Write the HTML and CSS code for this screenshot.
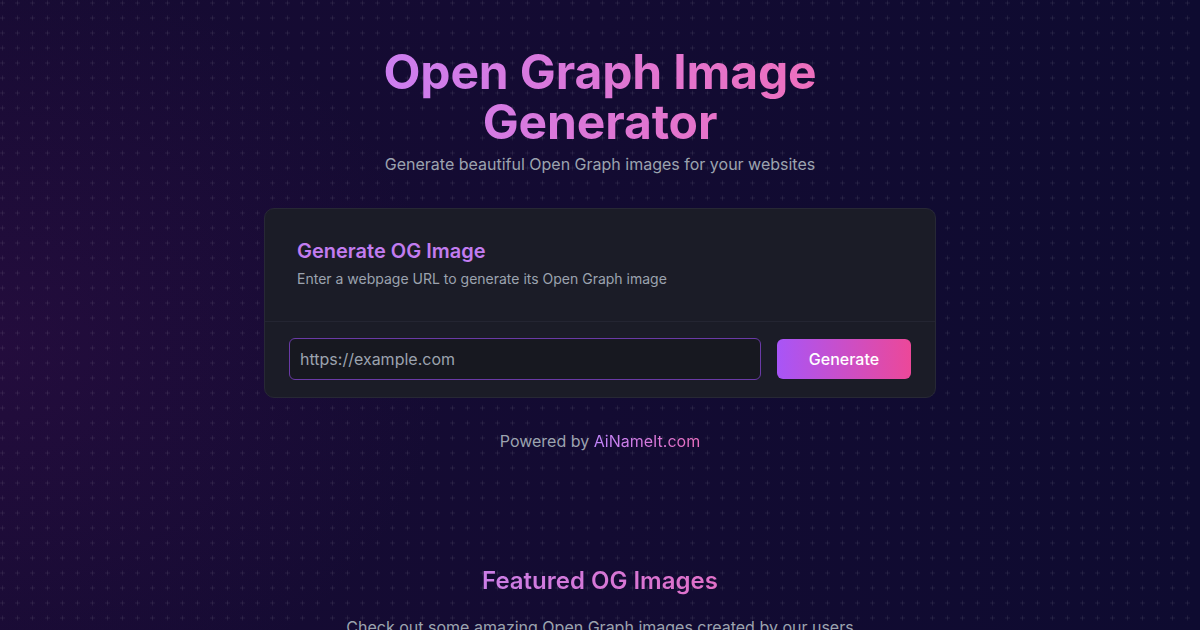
FILE: index.html
```html
<!DOCTYPE html>
<html lang="en">
<head>
<meta charset="utf-8">
<title>Open Graph Image Generator</title>
<link rel="stylesheet" href="styles.css">
</head>
<body>
<div class="page">
  <header class="hero">
    <h1 class="title">Open Graph Image<br>Generator</h1>
    <p class="subtitle">Generate beautiful Open Graph images for your websites</p>
  </header>

  <section class="card">
    <div class="card-header">
      <h2 class="card-title">Generate OG Image</h2>
      <p class="card-desc">Enter a webpage URL to generate its Open Graph image</p>
    </div>
    <form class="card-body">
      <input class="url-input" type="text" placeholder="https://example.com">
      <button class="btn" type="button">Generate</button>
    </form>
  </section>

  <p class="powered">Powered by <span class="brand">AiNameIt.com</span></p>

  <section class="featured">
    <h2 class="featured-title">Featured OG Images</h2>
    <p class="featured-desc">Check out some amazing Open Graph images created by our users</p>
  </section>
</div>
</body>
</html>
```

FILE: styles.css
```css
* { box-sizing: border-box; }

html, body {
  margin: 0;
  height: 100%;
}

body {
  font-family: Inter, "Noto Sans", "Liberation Sans", sans-serif;
  color: #e5e7eb;
  background-color: #120b30;
  background-image:
    url("data:image/svg+xml,%3Csvg xmlns='http://www.w3.org/2000/svg' width='15' height='15'%3E%3Cpath d='M2.5 0.5v5M0 3h5' stroke='%23ffffff' stroke-opacity='0.07' stroke-width='1'/%3E%3C/svg%3E"),
    radial-gradient(ellipse 450px 380px at 0% 55%, rgba(110, 20, 120, 0.14), rgba(110, 20, 120, 0) 100%),
    linear-gradient(to right, #170b33 0%, #130b32 50%, #0e0b30 100%);
  background-repeat: repeat, no-repeat, no-repeat;
  overflow: hidden;
}

.page {
  display: flex;
  flex-direction: column;
  align-items: center;
  padding-top: 47px;
}

.hero {
  display: flex;
  flex-direction: column;
  align-items: center;
}

.title {
  margin: 0;
  font-size: 48px;
  line-height: 50px;
  font-weight: 700;
  text-align: center;
  letter-spacing: -0.15px;
  background: linear-gradient(to right, #cc7ef0, #ee6fbd);
  -webkit-background-clip: text;
  background-clip: text;
  color: transparent;
}

.subtitle {
  margin: 5px 0 0;
  font-size: 16px;
  line-height: 24px;
  color: #9ca3af;
}

.card {
  margin-top: 32px;
  width: 672px;
  background: #1b1c27;
  border: 1px solid #272835;
  border-radius: 10px;
}

.card-header {
  padding: 28px 32px 32px;
  border-bottom: 1px solid #242532;
}

.card-title {
  margin: 0;
  font-size: 20px;
  line-height: 28px;
  font-weight: 600;
  color: #c27cf0;
}

.card-desc {
  margin: 4px 0 0;
  font-size: 14px;
  line-height: 20px;
  color: #9ca3af;
}

.card-body {
  margin: 0;
  display: flex;
  align-items: center;
  gap: 16px;
  padding: 16px 24px 17px;
}

.url-input {
  flex: 1;
  height: 42px;
  padding: 0 10px;
  background: #171820;
  border: 1px solid #6a3aa6;
  border-radius: 6px;
  font-family: inherit;
  font-size: 16px;
  color: #e5e7eb;
  outline: none;
}

.url-input::placeholder {
  color: #9ca3af;
}

.btn {
  width: 134px;
  height: 40px;
  border: none;
  border-radius: 6px;
  background: linear-gradient(to right, #a855f7, #ec4899);
  color: #ffffff;
  font-family: inherit;
  font-size: 16px;
  font-weight: 500;
}

.powered {
  margin: 31px 0 0;
  font-size: 16px;
  line-height: 24px;
  color: #9ca3af;
}

.brand {
  background: linear-gradient(to right, #c084fc, #ec6fc0);
  -webkit-background-clip: text;
  background-clip: text;
  color: transparent;
}

.featured {
  margin-top: 112px;
  display: flex;
  flex-direction: column;
  align-items: center;
}

.featured-title {
  margin: 0;
  font-size: 24px;
  line-height: 32px;
  font-weight: 600;
  background: linear-gradient(to right, #cc7ee6, #e070c8);
  -webkit-background-clip: text;
  background-clip: text;
  color: transparent;
}

.featured-desc {
  margin: 18px 0 0;
  font-size: 16px;
  line-height: 24px;
  color: #9ca3af;
}
```
